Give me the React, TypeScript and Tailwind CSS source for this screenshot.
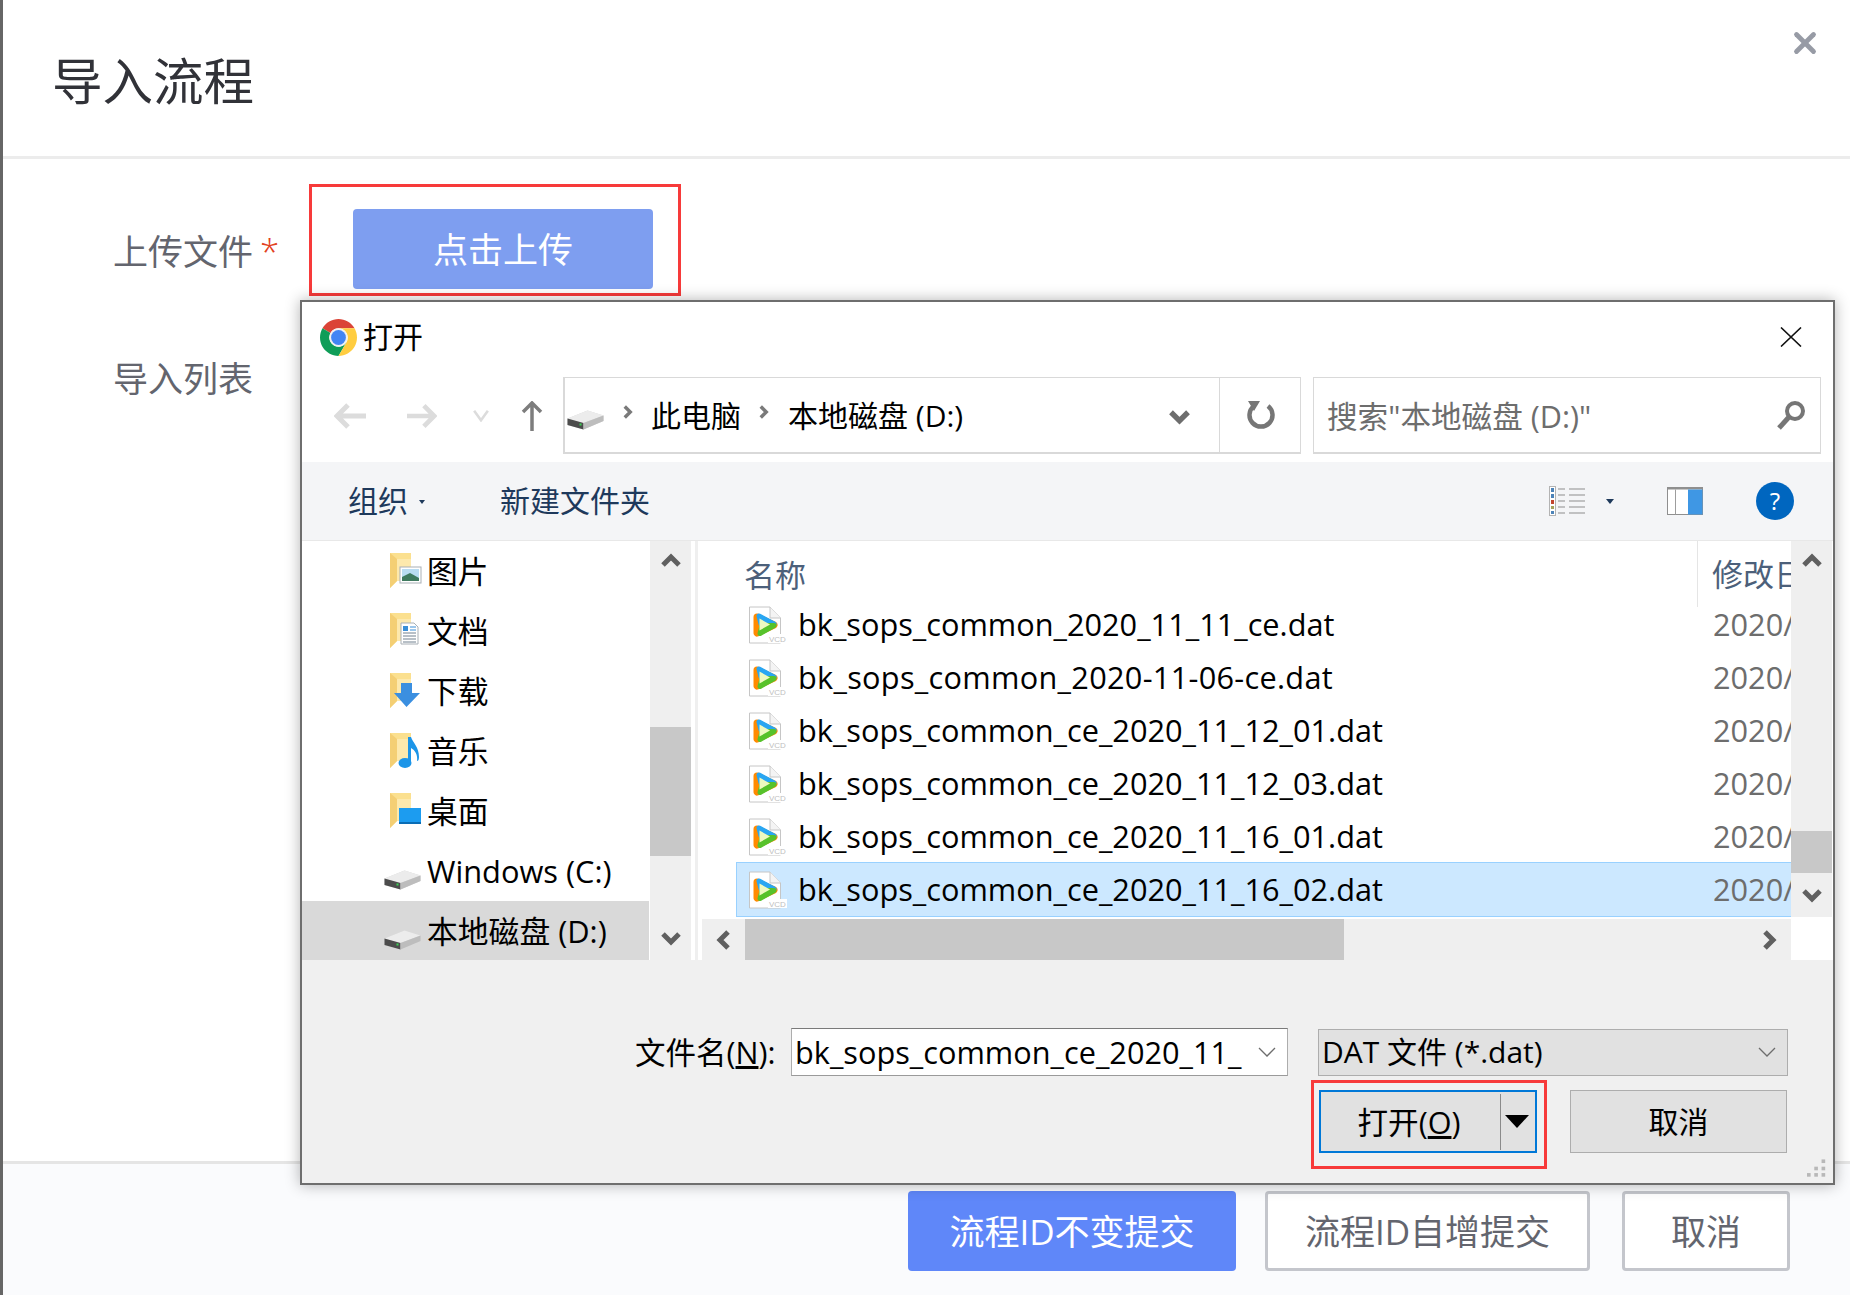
import React from "react";
import { X } from "lucide-react";

const navItems = [
  { label: "图片", kind: "pictures" },
  { label: "文档", kind: "docs" },
  { label: "下载", kind: "downloads" },
  { label: "音乐", kind: "music" },
  { label: "桌面", kind: "desktop" },
  { label: "Windows (C:)", kind: "drive" },
  { label: "本地磁盘 (D:)", kind: "drive", active: true },
];

const files = [
  "bk_sops_common_2020_11_11_ce.dat",
  "bk_sops_common_2020-11-06-ce.dat",
  "bk_sops_common_ce_2020_11_12_01.dat",
  "bk_sops_common_ce_2020_11_12_03.dat",
  "bk_sops_common_ce_2020_11_16_01.dat",
  "bk_sops_common_ce_2020_11_16_02.dat",
];

function ChromeIcon() {
  return (
    <svg viewBox="4 4 40 40" className="w-[37px] h-[37px] shrink-0">
      <path d="M6.68 14A20 20 0 0 1 41.32 14H24A10 10 0 0 0 15.34 19Z" fill="#db4437" />
      <path d="M6.68 14A20 20 0 0 0 24 44L32.66 29A10 10 0 0 1 15.34 19Z" fill="#0f9d58" />
      <path d="M24 44A20 20 0 0 0 41.32 14H24A10 10 0 0 1 32.66 29Z" fill="#ffcd40" />
      <circle cx="24" cy="24" r="10" fill="#f1f1f1" />
      <circle cx="24" cy="24" r="8" fill="#4285f4" />
    </svg>
  );
}

function Chevron({ dir, className }: { dir: "up" | "down" | "left" | "right"; className?: string }) {
  const d = {
    up: "M2 12 L10 4 L18 12",
    down: "M2 4 L10 12 L18 4",
    left: "M12 2 L4 10 L12 18",
    right: "M4 2 L12 10 L4 18",
  }[dir];
  const box = dir === "up" || dir === "down" ? "0 0 20 16" : "0 0 16 20";
  return (
    <svg viewBox={box} className={className}>
      <path d={d} fill="none" stroke="currentColor" strokeWidth="5" />
    </svg>
  );
}

function DriveIcon({ className }: { className?: string }) {
  return (
    <svg viewBox="0 0 36 20" className={className}>
      <path d="M0 8.5 L20 0.5 L36 5.5 L36 11 L16 19.5 L0 15 Z" fill="#d5d5d5" />
      <path d="M0 8.5 L20 0.5 L36 5.5 L16 13 Z" fill="#ececec" />
      <path d="M0 8.5 L16 13 L16 19.5 L0 15 Z" fill="#4c4c4c" />
      <path d="M16 13 L36 5.5 L36 11 L16 19.5 Z" fill="#bdbdbd" />
      <rect x="12" y="13.5" width="2" height="2" fill="#39d353" />
    </svg>
  );
}

function FolderIcon({ kind }: { kind: string }) {
  return (
    <svg viewBox="0 0 38 36" className="w-[38px] h-[36px]">
      <path d="M5 0 H26 V28 H12 L5 35 Z" fill="#fbe08f" />
      <path d="M5 0 L12 6 V28 L5 35 Z" fill="#f4cf74" />
      <path d="M12 6 H26 V28 H12 Z" fill="#fde9ad" />
      {kind === "pictures" && (
        <g>
          <rect x="15" y="14" width="21" height="16" fill="#fff" stroke="#a9b0b6" />
          <rect x="17" y="16" width="17" height="12" fill="#b9dcf2" />
          <path d="M17 24 L25 20 L34 25 V28 H17 Z" fill="#3f7a5f" />
        </g>
      )}
      {kind === "docs" && (
        <g>
          <path d="M16 10 H29 L33 14 V31 H16 Z" fill="#fff" stroke="#a9b0b6" />
          <path d="M18 13 H23 V18 H18 Z" fill="#3a8fd8" />
          <path d="M18 20 H31 M18 23 H31 M18 26 H31 M18 29 H31" stroke="#70808f" strokeWidth="1" />
          <path d="M25 14 H31 M25 17 H31" stroke="#3a8fd8" strokeWidth="1" />
        </g>
      )}
      {kind === "downloads" && (
        <path d="M16 11 H27 V21 H35 L21.5 35 L9 21 H16 Z" transform="translate(0 -1)" fill="#3b8fe0" />
      )}
      {kind === "music" && (
        <g fill="#1c95e8">
          <ellipse cx="20" cy="30" rx="6.5" ry="5" />
          <rect x="23" y="4" width="3" height="26" />
          <path d="M26 4 C28 10 34 14 34 24 C34 27 33 28 32 28 C33 22 30 17 26 15 Z" />
        </g>
      )}
      {kind === "desktop" && (
        <g>
          <rect x="14" y="15" width="22" height="16" fill="#1c9cf0" />
          <rect x="14" y="29" width="22" height="2" fill="#0a6db5" />
        </g>
      )}
    </svg>
  );
}

function VcdIcon() {
  return (
    <svg viewBox="0 0 38 38" className="w-[38px] h-[38px] shrink-0">
      <path d="M0.5 1 H21 L31.5 12 V37 H0.5 Z" fill="#fff" stroke="#c6c6c6" />
      <path d="M21 1 V12 H31.5" fill="#f4f4f4" stroke="#c6c6c6" />
      <path d="M8 11 L25 19 L8 27 Z" fill="#ff8a00" stroke="#ff8a00" strokeWidth="7" strokeLinejoin="round" />
      <path d="M10 10 L25 18 L12 18 Z" fill="#29a6f2" stroke="#29a6f2" strokeWidth="5" strokeLinejoin="round" />
      <path d="M25 19.5 L11 27.5 L13 19.5 Z" fill="#57c22b" stroke="#57c22b" strokeWidth="5" strokeLinejoin="round" />
      <path d="M10.5 12.5 L21 18.5 L10.5 24.5 Z" fill="#eef9c0" />
      <rect x="19" y="28" width="19" height="9" fill="#fff" />
      <text x="20" y="35.5" fontSize="8" fill="#c0c0c0" fontFamily="'Liberation Sans', sans-serif">VCD</text>
    </svg>
  );
}

function FileRow({ name, selected }: { name: string; selected?: boolean }) {
  return (
    <div
      className={`flex items-center h-[53px] ml-[39px] pl-[12px] whitespace-nowrap ${
        selected ? "bg-[#cce8ff] outline outline-1 outline-[#99d1ff]" : ""
      }`}
    >
      <VcdIcon />
      {/* hyphens are narrower here than in the original font */}
      <span className={`ml-[11px] w-[915px] shrink-0 text-black text-[30.7px] -mt-[1px] ${name.includes("-") ? "tracking-[0.29px]" : ""}`}>{name}</span>
      <span className="text-[#6d6d6d] text-[30.7px] -mt-[1px]">2020/11/16</span>
    </div>
  );
}

function FileDialog() {
  return (
    <div className="absolute left-[297px] top-[300px] w-[1535px] h-[885px] border-2 border-[#6e6e6e] bg-white shadow-[0_0_14px_rgba(0,0,0,0.3)] text-[30px] leading-[40px] flex flex-col">
      {/* title bar */}
      <div className="h-[75px] flex items-center pl-[18px] pr-[31px] pb-[5px] shrink-0">
        <ChromeIcon />
        <span className="ml-[6px] text-black">打开</span>
        <svg viewBox="0 0 22 20" className="ml-auto w-[22px] h-[20px]">
          <path d="M1 0.5 L21 19.5 M21 0.5 L1 19.5" stroke="#111" strokeWidth="1.6" />
        </svg>
      </div>

      {/* address row */}
      <div className="h-[77px] flex shrink-0 pl-[32px]">
        <div className="flex items-center w-[229px] shrink-0 text-[#dcdcdc]">
          <svg viewBox="0 0 32 26" className="w-[32px] h-[26px]">
            <path d="M14 2 L3 13 L14 24 M3 13 H32" fill="none" stroke="currentColor" strokeWidth="5" />
          </svg>
          <svg viewBox="0 0 32 26" className="ml-[41px] w-[30px] h-[26px]">
            <path d="M18 2 L29 13 L18 24 M29 13 H0" fill="none" stroke="currentColor" strokeWidth="5" />
          </svg>
          <svg viewBox="0 0 18 14" className="ml-[35px] w-[18px] h-[12px]">
            <path d="M1 1 L9 12 L17 1" fill="none" stroke="currentColor" strokeWidth="3" />
          </svg>
          <svg viewBox="0 0 22 30" className="ml-[31px] w-[22px] h-[30px] text-[#7d7d7d]">
            <path d="M2 11 L11 2 L20 11 M11 2 V30" fill="none" stroke="currentColor" strokeWidth="3.5" />
          </svg>
        </div>
        <div className="w-[656px] shrink-0 border-t border-b-2 border-l-2 border-[#d9d9d9] flex items-center text-black whitespace-nowrap">
          <DriveIcon className="ml-[2px] w-[37px] h-[20px] mt-[10px]" />
          <Chevron dir="right" className="ml-[18px] w-[11px] h-[14px] -mt-[6px] text-[#7a7a7a]" />
          <span className="ml-[18px] mt-[2px]">此电脑</span>
          <Chevron dir="right" className="ml-[17px] w-[11px] h-[14px] -mt-[6px] text-[#7a7a7a]" />
          <span className="ml-[19px] mt-[2px]">本地磁盘 (D:)</span>
          <Chevron dir="down" className="ml-auto mr-[28px] w-[23px] h-[17px] mt-[2px] text-[#6d6d6d]" />
        </div>
        <div className="w-[82px] shrink-0 border border-b-2 border-[#d9d9d9] flex items-center justify-center">
          <svg viewBox="0 0 30 30" className="w-[30px] h-[30px] ml-[2px]">
            <path d="M8 6 A11.5 11.5 0 1 0 22 6" fill="none" stroke="#767676" strokeWidth="4.5" />
            <path d="M2 1 L14 1 L8 11 Z" fill="#767676" />
          </svg>
        </div>
        <div className="ml-[12px] w-[508px] shrink-0 border border-b-2 border-[#d9d9d9] flex items-center pl-[13px] pr-[14px] text-[#6d6d6d] whitespace-nowrap">
          <span className="text-[30.6px] mt-[2px]">搜索"本地磁盘 (D:)"</span>
          <svg viewBox="0 0 30 30" className="ml-auto w-[30px] h-[30px]">
            <circle cx="19" cy="11" r="8" fill="none" stroke="#767676" strokeWidth="4" />
            <path d="M13 17 L3 28" stroke="#767676" strokeWidth="5" />
          </svg>
        </div>
      </div>

      {/* toolbar */}
      <div className="mt-[8px] h-[79px] shrink-0 bg-[#f4f5f7] border-b border-[#e8e8e8] flex items-center pl-[46px] text-[#1e395b]">
        <span className="-mt-[1px]">组织</span>
        <span className="ml-[11px] mt-[2px] w-0 h-0 border-x-[3.5px] border-x-transparent border-t-[4px] border-t-[#1e395b]" />
        <span className="ml-[75px] -mt-[1px]">新建文件夹</span>
        <div className="ml-auto flex items-center pr-[39px]">
          <svg viewBox="0 0 36 30" className="w-[36px] h-[30px]">
            <rect x="0.5" y="0.5" width="6" height="29" fill="#fff" stroke="#b3b3b3" />
            <rect x="2" y="2" width="3" height="4" fill="#4c83b8" />
            <rect x="2" y="8" width="3" height="4" fill="#4c83b8" />
            <rect x="2" y="14" width="3" height="4" fill="#c2452f" />
            <rect x="2" y="20" width="3" height="3" fill="#a5a35c" />
            <rect x="2" y="25" width="3" height="3" fill="#4c83b8" />
            <path d="M9 3 H16 M20 3 H36 M9 9 H16 M20 9 H36 M9 15 H16 M20 15 H36 M9 21 H16 M20 21 H36 M9 27 H16 M20 27 H36" stroke="#8d8d8d" strokeWidth="1" />
          </svg>
          <span className="ml-[21px] w-0 h-0 border-x-[4px] border-x-transparent border-t-[5px] border-t-[#1e395b]" />
          <svg viewBox="0 0 36 28" className="ml-[53px] w-[36px] h-[28px]">
            <rect x="0.5" y="0.5" width="35" height="27" fill="#fff" stroke="#8f8f8f" />
            <rect x="0" y="0" width="36" height="2.5" fill="#8f8f8f" />
            <rect x="21" y="2.5" width="14.5" height="25" fill="#3f97e4" />
            <rect x="8" y="2.5" width="1" height="25" fill="#9d9d9d" />
          </svg>
          <div className="ml-[53px] w-[38px] h-[38px] rounded-full bg-[#0066bf] text-white text-[24px] leading-none flex items-center justify-center">?</div>
        </div>
      </div>

      {/* panes */}
      <div className="h-[419px] shrink-0 flex overflow-hidden">
        <div className="w-[348px] shrink-0">
          {navItems.map((item) => (
            <div key={item.label} className={`h-[60px] flex items-center pl-[82px] whitespace-nowrap text-black ${item.active ? "bg-[#d9d9d9] mr-[1px]" : ""}`}>
              <div className="w-[43px] shrink-0">
                {item.kind === "drive" ? (
                  <DriveIcon className="w-[37px] h-[20px] mt-[18px]" />
                ) : (
                  <div className="pl-[1px]">
                    <FolderIcon kind={item.kind} />
                  </div>
                )}
              </div>
              <span className="text-[30.8px]">{item.label}</span>
            </div>
          ))}
        </div>
        <div className="w-[41px] shrink-0 bg-[#efefef] flex flex-col text-[#606060]">
          <div className="h-[186px] flex justify-center pt-[12px]">
            <Chevron dir="up" className="w-[20px] h-[16px]" />
          </div>
          <div className="h-[129px] bg-[#c8c8c8]" />
          <div className="flex-1 flex justify-center items-end pb-[14px]">
            <Chevron dir="down" className="w-[20px] h-[16px]" />
          </div>
        </div>
        <div className="ml-[4px] w-[3px] shrink-0 bg-[#efefef]" />

        <div className="w-[1093px] shrink-0">
          <div className="h-[376px] overflow-hidden">
            <div className="h-[57px] relative flex items-center pl-[46px] pt-[11px] text-[#4c607a] whitespace-nowrap">
              <span className="text-[31px]">名称</span>
              <span className="absolute left-[999px] top-0 h-[66px] w-px bg-[#e5e5e5]" />
              <span className="absolute left-[1014px] top-[13px] text-[31px]">修改日期</span>
            </div>
            {files.map((f, i) => (
              <FileRow key={f} name={f} selected={i === 5} />
            ))}
          </div>
          <div className="mt-[2px] ml-[4px] h-[41px] bg-[#efefef] flex text-[#606060]">
            <div className="w-[43px] flex items-center justify-center">
              <Chevron dir="left" className="w-[16px] h-[20px]" />
            </div>
            <div className="w-[599px] bg-[#c8c8c8]" />
            <div className="flex-1 flex items-center justify-end pr-[14px]">
              <Chevron dir="right" className="w-[16px] h-[20px]" />
            </div>
          </div>
        </div>
        <div className="w-[41px] h-[376px] shrink-0 bg-[#efefef] flex flex-col text-[#606060]">
          <div className="h-[290px] flex justify-center pt-[12px]">
            <Chevron dir="up" className="w-[20px] h-[16px]" />
          </div>
          <div className="h-[42px] bg-[#c8c8c8]" />
          <div className="flex-1 flex justify-center pt-[14px]">
            <Chevron dir="down" className="w-[20px] h-[16px]" />
          </div>
        </div>
      </div>

      {/* bottom */}
      <div className="flex-1 bg-[#f0f0f0] pt-[68px] relative text-black">
        <div className="flex h-[48px] items-center pl-[333px] whitespace-nowrap">
          <span className="w-[142px] shrink-0 text-[30.5px]">
            文件名(<span className="underline">N</span>):
          </span>
          <div className="ml-[14px] w-[497px] h-[48px] shrink-0 bg-white border border-[#7a7a7a] border-x-[#adadad] border-b-[#9a9a9a] flex items-center pl-[3px] pr-[11px] overflow-hidden">
            <span className="text-[30.7px]">bk_sops_common_ce_2020_11_</span>
            <svg viewBox="0 0 18 10" className="ml-auto w-[18px] h-[10px] shrink-0">
              <path d="M1 1 L9 9 L17 1" fill="none" stroke="#6d6d6d" strokeWidth="1.3" />
            </svg>
          </div>
          <div className="ml-[30px] w-[470px] h-[47px] shrink-0 bg-[#e1e1e1] border border-[#adadad] flex items-center pl-[3px] pr-[11px]">
            <span>DAT 文件 (*.dat)</span>
            <svg viewBox="0 0 18 10" className="ml-auto w-[18px] h-[10px]">
              <path d="M1 1 L9 9 L17 1" fill="none" stroke="#6d6d6d" strokeWidth="1.3" />
            </svg>
          </div>
        </div>
        <div className="flex items-start pl-[1009px] mt-[4px]">
          <div className="w-[236px] h-[89px] border-[3px] border-[#f73a3a] pl-[5px] pt-[7px]">
            <div className="w-[218px] h-[63px] border-[2px] border-[#0078d7] bg-[#e1e1e1] flex items-center">
              <span className="w-[179px] text-center text-[30.6px] pr-[3px]">
                打开(<span className="underline">O</span>)
              </span>
              <span className="w-px h-[56px] bg-[#8a8a8a]" />
              <span className="ml-[4px] w-0 h-0 border-x-[12px] border-x-transparent border-t-[13px] border-t-black" />
            </div>
          </div>
          <div className="ml-[23px] mt-[10px] w-[217px] h-[63px] bg-[#e1e1e1] border border-[#adadad] flex items-center justify-center">
            取消
          </div>
        </div>
        <svg viewBox="0 0 22 20" className="absolute right-[6px] bottom-[5px] w-[20px] h-[19px]">
          <g fill="#b8b8b8">
            <rect x="16" y="0" width="4" height="4" />
            <rect x="8" y="8" width="4" height="4" />
            <rect x="16" y="8" width="4" height="4" />
            <rect x="0" y="15" width="4" height="4" />
            <rect x="8" y="15" width="4" height="4" />
            <rect x="16" y="15" width="4" height="4" />
          </g>
        </svg>
      </div>
    </div>
  );
}

export default function App() {
  return (
    <div className="relative w-[1850px] h-[1295px] overflow-hidden bg-white border-l-[3px] border-[#666666] flex flex-col font-['Open_Sans','Noto_Sans_CJK_SC',sans-serif]">
      <div className="h-[159px] shrink-0 border-b-[3px] border-[#ececec] flex items-center pl-[49px] relative">
        <h1 className="text-[50.5px] leading-[70px] text-[#313238] font-normal mt-[6px]">导入流程</h1>
        <X className="absolute right-[28px] top-[26px] w-[34px] h-[34px] text-[#979ba5]" strokeWidth={3.4} />
      </div>

      <div className="flex-1 pt-[25px] text-[35px] leading-[49px] text-[#63656e]">
        <div className="flex pl-[110px]">
          <div className="w-[196px] shrink-0 pt-[43px] flex">
            <span>上传文件</span>
            <span className="ml-[7px] text-[#e2401c] font-light">*</span>
          </div>
          <div className="w-[372px] h-[112px] border-[3px] border-[#f73a3a] pl-[41px] pt-[22px]">
            <div className="w-[300px] h-[80px] rounded-[4px] bg-[#7e9ef0] text-white flex items-center justify-center">
              点击上传
            </div>
          </div>
        </div>
        <div className="pl-[110px] mt-[58px]">导入列表</div>
      </div>

      <div className="h-[134px] shrink-0 border-t-[3px] border-[#e5e5e5] bg-[#fafbfd] flex justify-end items-start pt-[27px] pr-[60px] text-[35px] leading-[49px]">
        <div className="w-[328px] h-[80px] rounded-[4px] bg-[#5f87f9] text-white flex items-center justify-center">流程ID不变提交</div>
        <div className="ml-[29px] w-[325px] h-[80px] rounded-[4px] bg-white border-[3px] border-[#c4c6cc] text-[#63656e] flex items-center justify-center">流程ID自增提交</div>
        <div className="ml-[32px] w-[168px] h-[80px] rounded-[4px] bg-white border-[3px] border-[#c4c6cc] text-[#63656e] flex items-center justify-center">取消</div>
      </div>

      <FileDialog />
    </div>
  );
}
